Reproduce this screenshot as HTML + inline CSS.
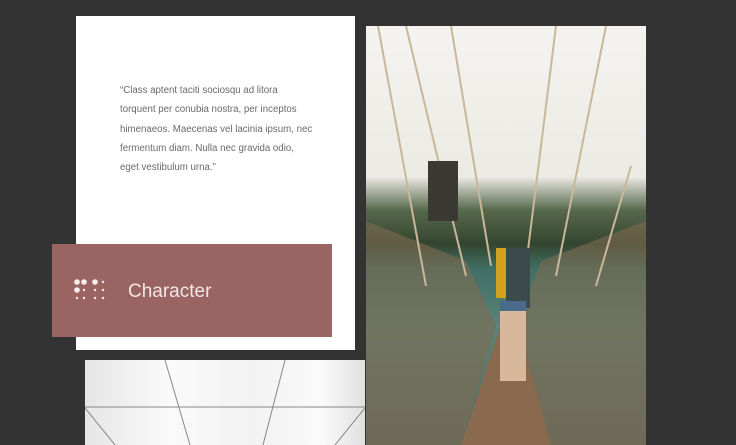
<!DOCTYPE html>
<html><head><style>
body{margin:0;width:736px;height:445px;background:#333;position:relative;overflow:hidden;font-family:"Liberation Sans",sans-serif}
.card{position:absolute;left:76px;top:16px;width:279px;height:334px;background:#fff}
.q{position:absolute;left:120px;top:81px;white-space:nowrap;font-size:9.7px;line-height:19.3px;color:#6a6a6a}
.pink{position:absolute;left:52px;top:244px;width:280px;height:93px;background:#9a6462}
.pink span{position:absolute;left:76px;top:37px;color:#f3e6e4;font-size:19px}
.ceil{position:absolute;left:85px;top:360px;width:280px;height:85px;background:linear-gradient(90deg,#e6e6e6,#fafafa 30%,#f2f2f2 60%,#fafafa 85%,#e0e0e0)}
.photo{position:absolute;left:366px;top:26px;width:280px;height:419px;overflow:hidden;
background:linear-gradient(180deg,#f4f3f0 0%,#eceae4 36%,#56684c 44%,#34452f 52%,#3f6f66 58%,#5a8479 72%,#566b62 100%)}
</style></head><body>
<div class="card"></div>
<div class="q">“Class aptent taciti sociosqu ad litora<br>torquent per conubia nostra, per inceptos<br>himenaeos. Maecenas vel lacinia ipsum, nec<br>fermentum diam. Nulla nec gravida odio,<br>eget vestibulum urna.”</div>
<div class="pink">
<svg style="position:absolute;left:22px;top:35px" width="40" height="24" fill="#f6eeee">
<circle cx="3" cy="3" r="2.8"/><circle cx="10" cy="3" r="2.8"/><circle cx="21" cy="3" r="2.8"/><circle cx="29" cy="3" r="1.2"/>
<circle cx="3" cy="11" r="2.8"/><circle cx="10" cy="11" r="1.2"/><circle cx="21" cy="11" r="1.2"/><circle cx="29" cy="11" r="1.2"/>
<circle cx="3" cy="19" r="1.2"/><circle cx="10" cy="19" r="1.2"/><circle cx="21" cy="19" r="1.2"/><circle cx="29" cy="19" r="1.2"/>
</svg>
<span>Character</span></div>
<div class="ceil">
<svg width="280" height="85" style="position:absolute;left:0;top:0" stroke="#888" stroke-width="1" fill="none">
<line x1="80" y1="0" x2="105" y2="85"/><line x1="200" y1="0" x2="178" y2="85"/>
<line x1="0" y1="47" x2="280" y2="47"/><line x1="0" y1="48" x2="30" y2="85"/><line x1="280" y1="48" x2="250" y2="85"/>
</svg></div>
<div class="photo">
<svg width="280" height="419" style="position:absolute;left:0;top:0">
<polygon points="95,419 185,419 150,290 138,290" fill="#8a6a4e"/>
<polygon points="0,195 100,235 130,300 95,419 0,419" fill="#7f6a50" opacity=".6"/>
<polygon points="280,195 175,235 150,300 185,419 280,419" fill="#7f6a50" opacity=".6"/>
<g stroke="#c9b79a" stroke-width="2" fill="none">
<line x1="12" y1="0" x2="60" y2="260"/><line x1="40" y1="0" x2="100" y2="250"/>
<line x1="85" y1="0" x2="125" y2="240"/><line x1="190" y1="0" x2="160" y2="240"/>
<line x1="240" y1="0" x2="190" y2="250"/><line x1="265" y1="140" x2="230" y2="260"/>
</g>
<rect x="62" y="135" width="30" height="60" fill="#3a3a32"/>
<rect x="130" y="222" width="14" height="50" fill="#d4a020"/>
<rect x="140" y="222" width="24" height="60" fill="#3b4a4a"/>
<rect x="134" y="275" width="26" height="10" fill="#4a6a8a"/>
<rect x="134" y="285" width="26" height="70" fill="#d8b89a"/>
</svg></div>
</body></html>
